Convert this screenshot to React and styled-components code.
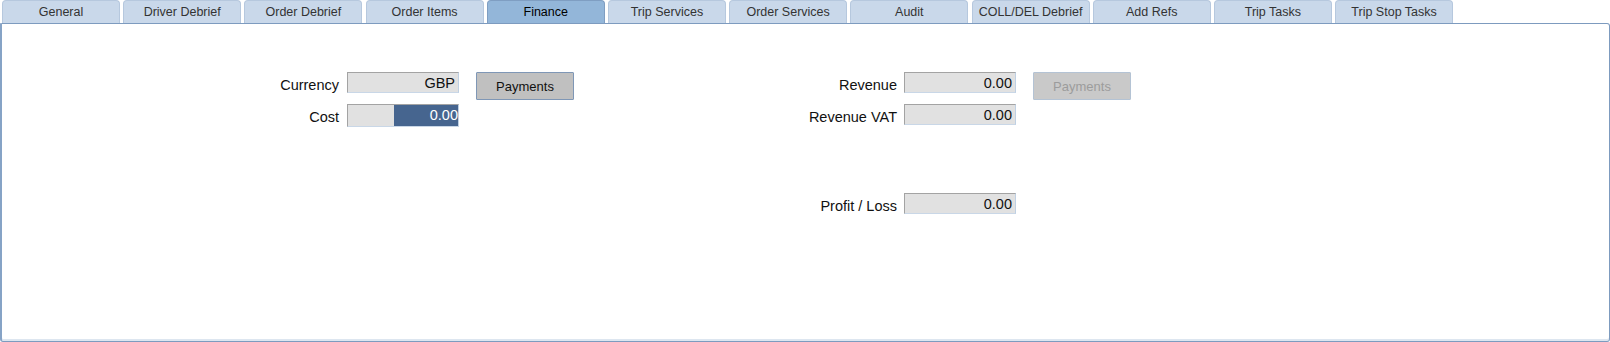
import React from 'react'
import styled, { createGlobalStyle } from 'styled-components'

const Global = createGlobalStyle`
  html, body {
    margin: 0;
    padding: 0;
    background: #ffffff;
  }
  body {
    font-family: "Liberation Sans", Arial, sans-serif;
    color: #111;
  }
`

const tabs = [
  'General',
  'Driver Debrief',
  'Order Debrief',
  'Order Items',
  'Finance',
  'Trip Services',
  'Order Services',
  'Audit',
  'COLL/DEL Debrief',
  'Add Refs',
  'Trip Tasks',
  'Trip Stop Tasks',
]

function App() {
  return (
    <Page>
      <Global />
      <TabBar>
        {tabs.map((t) => (
          <Tab key={t} $active={t === 'Finance'}>
            {t}
          </Tab>
        ))}
      </TabBar>
      <Panel>
        <Form>
          <Group>
            <Row $labelWidth={107}>
              <Label>Currency</Label>
              <Field>GBP</Field>
              <Button>Payments</Button>
            </Row>
            <Row $labelWidth={107}>
              <Label>Cost</Label>
              <Field $tall>
                <Selected>0.00</Selected>
              </Field>
            </Row>
          </Group>

          <Group $right>
            <Row $labelWidth={123}>
              <Label $pad={7}>Revenue</Label>
              <Field>0.00</Field>
              <Button disabled>Payments</Button>
            </Row>
            <Row $labelWidth={123}>
              <Label $pad={7}>Revenue VAT</Label>
              <Field>0.00</Field>
            </Row>
            <Row $labelWidth={123} $top={57}>
              <Label $pad={7}>Profit / Loss</Label>
              <Field>0.00</Field>
            </Row>
          </Group>
        </Form>
      </Panel>
    </Page>
  )
}

export default App

const Page = styled.div`
  display: flex;
  flex-direction: column;
  height: 342px;
  width: 1610px;
  box-sizing: border-box;
`

const TabBar = styled.div`
  display: flex;
  gap: 3.2px;
  height: 23px;
  padding-left: 2px;
  align-items: flex-end;
`

const Tab = styled.div`
  width: 118px;
  height: 23px;
  box-sizing: border-box;
  border: 1px solid ${(p) => (p.$active ? '#7f9ec2' : '#b6c8de')};
  border-bottom: none;
  border-radius: 4px 4px 0 0;
  background: ${(p) => (p.$active ? '#93b6d9' : '#c9d8ea')};
  color: ${(p) => (p.$active ? '#000' : '#333')};
  font-size: 12.5px;
  display: flex;
  align-items: center;
  justify-content: center;
  padding-bottom: 1px;
  white-space: nowrap;
`

const Panel = styled.div`
  flex: 1;
  box-sizing: border-box;
  border: 1px solid #7d9bbf;
  border-left: 2px solid #86a3c6;
  border-radius: 0 3px 3px 3px;
  box-shadow: inset 0 -2px 0 #dde6f0;
  background: #fff;
`

const Form = styled.div`
  display: flex;
  padding: 48px 0 0 238px;
`

const Group = styled.div`
  display: flex;
  flex-direction: column;
  margin-left: ${(p) => (p.$right ? '207px' : '0')};
`

const Row = styled.div`
  display: grid;
  grid-template-columns: ${(p) => p.$labelWidth}px 112px 115px;
  height: 32px;
  margin-top: ${(p) => (p.$top ? `${p.$top}px` : '0')};
  align-items: start;
`

const Label = styled.div`
  font-size: 14.5px;
  line-height: 21px;
  padding-top: 3px;
  padding-right: ${(p) => (p.$pad ? `${p.$pad}px` : '8px')};
  text-align: right;
  white-space: nowrap;
  color: #111;
`

const Field = styled.div`
  height: ${(p) => (p.$tall ? '23px' : '21px')};
  box-sizing: border-box;
  background: #e1e1e1;
  border: 1px solid;
  border-color: #a3a3a3 #bfd0e3 #c9d7e7 #a3a3a3;
  font-size: 14.5px;
  line-height: 20px;
  text-align: right;
  padding-right: 3px;
  display: flex;
  justify-content: flex-end;
  overflow: hidden;
  color: #111;
`

const Selected = styled.span`
  background: #46658f;
  color: #fff;
  width: 64px;
  margin-right: -3px;
  text-align: right;
  line-height: 21px;
`

const Button = styled.button`
  justify-self: end;
  width: 98px;
  height: 28px;
  box-sizing: border-box;
  font-family: "Liberation Sans", Arial, sans-serif;
  font-size: 13px;
  background: ${(p) => (p.disabled ? '#c9c9c9' : '#c0c0c0')};
  color: ${(p) => (p.disabled ? '#9c9c9c' : '#111')};
  border: 1px solid ${(p) => (p.disabled ? '#b4c3d4' : '#7f97b6')};
  border-radius: 1px;
  padding: 0;
  padding-top: 1px;
`
